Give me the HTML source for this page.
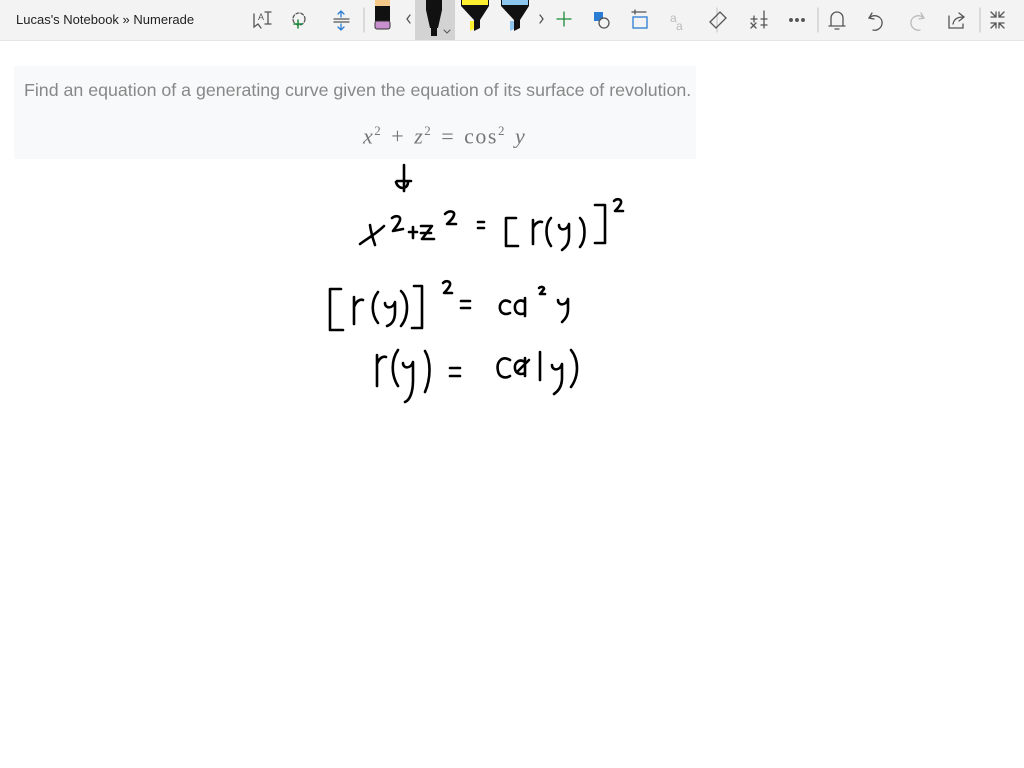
<!DOCTYPE html>
<html><head><meta charset="utf-8"><style>
body{margin:0;width:1024px;height:768px;background:#fff;font-family:"Liberation Sans",sans-serif;overflow:hidden;position:relative}
.tb{position:absolute;left:0;top:0;width:1024px;height:40px;background:#f3f3f3;border-bottom:1px solid #e6e6e6}
.title{position:absolute;left:16px;top:12px;font-size:13px;color:#222}
.q{position:absolute;left:14px;top:66px;width:682px;height:93px;background:#f8f9fa}
.q p{margin:0;position:absolute;left:10px;top:14px;font-size:17.8px;color:#888;white-space:nowrap}
.eq{position:absolute;left:363px;top:123px;font-family:"Liberation Serif",serif;font-size:22px;color:#777;white-space:nowrap;letter-spacing:1.5px;word-spacing:2px}
.eq sup{font-size:13px}
svg{position:absolute;left:0;top:0}
</style></head><body>
<div class="tb"><div class="title">Lucas's Notebook » Numerade</div></div>
<svg width="1024" height="41" fill="none" stroke-linecap="round">
<g stroke="#555" stroke-width="1.3">
<path d="M254 14 L254 27 L258 24 L261 28"/><text x="258" y="20" font-size="9" fill="#555" stroke="none">A</text><path d="M265 12h6M268 12v12M265 24h6"/>
<circle cx="299" cy="19" r="6" stroke-dasharray="3 2"/>
<path d="M334 19h15M334 22h15"/><path d="M341 11v6M338 14l3-3 3 3M341 24v6M338 27l3 3 3-3" stroke="#2b7cd3"/>
<path d="M364 8v24M717 8v24M818 8v24M980 8v24" stroke="#ccc"/>
<path d="M410 15l-3 4 3 4M540 15l3 4-3 4"/>
</g>
<path d="M298 20v8M294 24h8" stroke="#1a8a3a" stroke-width="1.5"/>
<path d="M564 12v14M557 19h14" stroke="#1a8a3a" stroke-width="1.3"/>
<rect x="375" y="0" width="15" height="6" fill="#f4c98a"/><rect x="375" y="6" width="15" height="15" fill="#111"/><rect x="375" y="21" width="15" height="8" rx="2" fill="#c98fcf" stroke="#333"/>
<rect x="415" y="0" width="40" height="40" fill="#d3d3d3"/>
<path d="M426 0h16v10l-4 18h-8l-4-18z" fill="#111"/><path d="M431 28h6v8h-6z" fill="#111"/><path d="M444 30l3 3 3-3" stroke="#555"/>
<path d="M461 0h28v6l-9 14v8l-6 3v-11l-13-14z" fill="#111"/><rect x="462" y="0" width="26" height="5" fill="#ffef30"/><path d="M470 21l4 0 0 8-4 2z" fill="#ffef30"/>
<path d="M501 0h28v6l-9 14v8l-6 3v-11l-13-14z" fill="#111"/><rect x="502" y="0" width="26" height="5" fill="#8cc6ef"/><path d="M510 21l4 0 0 8-4 2z" fill="#8cc6ef"/>
<g stroke="#555" stroke-width="1.3">
<rect x="594" y="12" width="9" height="9" fill="#2b7cd3" stroke="none"/><circle cx="604" cy="23" r="5" fill="#f3f3f3"/>
<rect x="633" y="17" width="14" height="11" stroke="#2b7cd3"/><path d="M632 12h14M635 10v4"/>
<text x="670" y="22" font-size="12" fill="#bbb" stroke="none">a</text><text x="676" y="30" font-size="12" fill="#bbb" stroke="none">a</text>
<path d="M710 22l10-10 6 6-10 10z"/>
<path d="M751 19h6M754 16v6M761 19h6M764 11v17M751 23l5 5M756 23l-5 5M761 25h6"/>
<circle cx="791" cy="20" r="1.3" fill="#555"/><circle cx="797" cy="20" r="1.3" fill="#555"/><circle cx="803" cy="20" r="1.3" fill="#555"/>
<path d="M831 26v-8a6 6 0 0 1 12 0v8zM829 26h16M835 29h4"/>
<path d="M872 13l-3 5 5 1M869 18c6-5 14-1 13 6-1 5-6 7-9 6"/>
<path d="M921 13l3 5-5 1M924 18c-6-5-14-1-13 6 1 5 6 7 9 6" stroke="#bbb"/>
<path d="M949 16v12h14v-4M953 24c1-5 5-7 10-7M959 13l5 4-5 4"/>
<path d="M991 12l5 5M996 12v5h-5M1004 12l-5 5M999 12v5h5M991 28l5-5M996 28v-5h-5M1004 28l-5-5M999 28v-5h5"/>
</g>
</svg>
<div class="q"><p>Find an equation of a generating curve given the equation of its surface of revolution.</p></div>
<div class="eq"><i>x</i><sup>2</sup> + <i>z</i><sup>2</sup> = cos<sup>2</sup> <i>y</i></div>
<svg width="1024" height="768" fill="none" stroke="#000" stroke-width="2.6" stroke-linecap="round" stroke-linejoin="round">
<path d="M404 165v26M396 182c2 8 12 8 12 0M397 181h14"/>
<path d="M360 244c8-6 16-10 24-18M370 225c1 8 3 14 5 20"/>
<path d="M392 218c4-3 9-2 8 2-1 4-5 8-7 11l10-2"/>
<path d="M409 232h8M413 227v11"/>
<path d="M421 226h11l-10 13h12M421 233h10"/>
<path d="M445 214c4-4 10-3 9 1-1 4-5 7-7 9h9"/>
<path d="M478 222h6M478 228h6"/>
<path d="M516 218h-10v28h12"/>
<path d="M533 220v24M533 228c2-5 6-7 9-6"/>
<path d="M551 218c-6 6-6 20 0 28"/>
<path d="M559 225c0 6 8 6 10-1v12c0 10-5 12-7 14"/>
<path d="M580 218c6 6 6 22 0 29"/>
<path d="M595 205h10v38h-10"/>
<path d="M614 201c3-3 8-2 7 2-1 3-4 6-6 8h8"/>
<path d="M341 289h-11v41h13"/>
<path d="M354 297v27M354 307c2-6 6-8 9-7"/>
<path d="M378 292c-7 9-7 22 0 31"/>
<path d="M385 303c0 6 8 6 10-1v10c0 10-5 13-8 14"/>
<path d="M401 291c8 8 8 25 0 35"/>
<path d="M414 286h8v42h-10"/>
<path d="M443 283c3-3 8-2 7 2-1 3-4 6-6 8h8"/>
<path d="M461 301h9M461 308h9"/>
<path d="M510 302c-6-4-11 1-10 7 1 5 6 6 10 4"/>
<path d="M525 302c-6-4-11 1-10 7 1 5 6 6 10 4M525 298v18"/>
<path d="M539 288c2-2 5-1 5 1l-4 5h5"/>
<path d="M558 300c0 6 8 6 10-1v10c0 8-4 11-6 13"/>
<path d="M377 355v31M377 364c2-6 6-8 9-7"/>
<path d="M398 350c-7 10-7 25 0 36"/>
<path d="M403 363c0 6 8 6 10-1v18c0 12-3 20-8 22"/>
<path d="M425 351c6 10 6 27 0 41"/>
<path d="M450 368h10M450 376h10"/>
<path d="M510 360c-8-5-14 2-12 11 1 6 7 8 12 5"/>
<path d="M525 362c-6-4-11 1-10 7 1 5 6 6 10 4M525 358v18M517 372l12-12"/>
<path d="M540 352v28"/>
<path d="M552 365c0 6 8 6 10-1v14c0 10-5 14-8 16"/>
<path d="M571 350c8 10 8 26 0 37"/>
</svg>
</body></html>
